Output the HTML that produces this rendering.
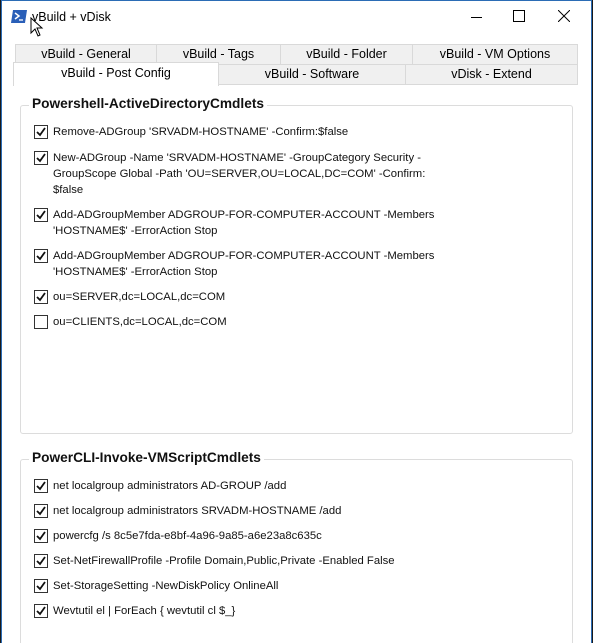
<!DOCTYPE html>
<html><head><style>
html,body{margin:0;width:593px;height:643px;overflow:hidden;}
body{background:#1a1a1a;font-family:"Liberation Sans",sans-serif;position:relative}
.win{position:absolute;left:1px;top:0;width:591px;height:643px;box-sizing:border-box;background:#fff;border-left:1px solid #2b6cb5;border-right:1px solid #2b6cb5;border-top:1px solid #2b6cb5;overflow:hidden}
.t{position:absolute;white-space:nowrap}
.tab{position:absolute;background:#f0f0f0;border:1px solid #d9d9d9;box-sizing:border-box;font-size:12.5px;color:#000;text-align:center;line-height:19px}
.gb{position:absolute;border:1px solid #dcdcdc;border-radius:3px;box-sizing:border-box}
.gt{position:absolute;background:#fff;font-weight:bold;font-size:13.7px;padding:0 3px;color:#111}
.cb{position:absolute;width:12px;height:12px;border:1px solid #333;background:#fff}
.cb svg{position:absolute;left:1px;top:1px}
.lb{position:absolute;font-size:11.3px;line-height:16px;color:#111;white-space:nowrap}
</style></head><body>
<div class="win">
<svg style="position:absolute;left:9px;top:9px" width="16" height="13"><path d="M2 0H16L14 13H0Z" fill="#2a5fb8"/><path d="M4 3L8 6L4 9" stroke="#fff" stroke-width="1.5" fill="none"/><path d="M8 10H12" stroke="#fff" stroke-width="1.3"/></svg>
<div class="t" style="left:30px;top:9px;font-size:12.5px">vBuild + vDisk</div>
<svg style="position:absolute;left:28px;top:16px" width="14" height="20"><path d="M1 1V16L5 12L8 19L10 18L7 11H12Z" fill="#fff" stroke="#000"/></svg>
<div class="t" style="left:469px;top:16px;width:11px;height:1px;background:#000"></div>
<div class="t" style="left:511px;top:9px;width:10px;height:10px;border:1px solid #000"></div>
<svg style="position:absolute;left:556px;top:9px" width="12" height="12"><path d="M0 0L12 12M12 0L0 12" stroke="#000"/></svg>

<div class="tab" style="left:13px;top:43px;width:142px;height:21px">vBuild - General</div>
<div class="tab" style="left:154px;top:43px;width:125px;height:21px">vBuild - Tags</div>
<div class="tab" style="left:278px;top:43px;width:133px;height:21px">vBuild - Folder</div>
<div class="tab" style="left:410px;top:43px;width:166px;height:21px">vBuild - VM Options</div>
<div class="tab" style="left:216px;top:63px;width:188px;height:21px">vBuild - Software</div>
<div class="tab" style="left:403px;top:63px;width:173px;height:21px">vDisk - Extend</div>
<div class="tab" style="left:11px;top:61px;width:206px;height:24px;background:#fff;border-bottom:none;line-height:21px">vBuild - Post Config</div>

<div class="gb" style="left:18px;top:104px;width:553px;height:329px"></div>
<div class="gt" style="left:27px;top:95px">Powershell-ActiveDirectoryCmdlets</div>
<div class="gb" style="left:18px;top:458px;width:553px;height:200px"></div>
<div class="gt" style="left:27px;top:449px">PowerCLI-Invoke-VMScriptCmdlets</div>

<div id="rows"></div>
</div>
<script>
var ck='<svg width="10" height="10"><path d="M1 5L4 8L9 1" stroke="#111" stroke-width="1.8" fill="none"/></svg>';
var rows=[[123,1,"Remove-ADGroup 'SRVADM-HOSTNAME' -Confirm:$false"],
[149,1,"New-ADGroup -Name 'SRVADM-HOSTNAME' -GroupCategory Security -<br>GroupScope Global -Path 'OU=SERVER,OU=LOCAL,DC=COM' -Confirm:<br>$false"],
[206,1,"Add-ADGroupMember ADGROUP-FOR-COMPUTER-ACCOUNT -Members<br>'HOSTNAME$' -ErrorAction Stop"],
[247,1,"Add-ADGroupMember ADGROUP-FOR-COMPUTER-ACCOUNT -Members<br>'HOSTNAME$' -ErrorAction Stop"],
[288,1,"ou=SERVER,dc=LOCAL,dc=COM"],
[313,0,"ou=CLIENTS,dc=LOCAL,dc=COM"],
[477,1,"net localgroup administrators AD-GROUP /add"],
[502,1,"net localgroup administrators SRVADM-HOSTNAME /add"],
[527,1,"powercfg /s 8c5e7fda-e8bf-4a96-9a85-a6e23a8c635c"],
[552,1,"Set-NetFirewallProfile -Profile Domain,Public,Private -Enabled False"],
[577,1,"Set-StorageSetting -NewDiskPolicy OnlineAll"],
[602,1,"Wevtutil el | ForEach { wevtutil cl $_}"]];
var h='';rows.forEach(function(r){h+='<div class="cb" style="left:32px;top:'+(r[0]+1)+'px">'+(r[1]?ck:'')+'</div><div class="lb" style="left:51px;top:'+r[0]+'px">'+r[2]+'</div>';});
document.getElementById('rows').innerHTML=h;
</script>
</body></html>
